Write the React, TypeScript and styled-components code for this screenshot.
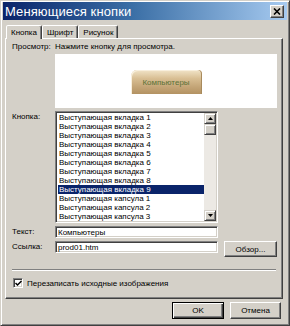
import React from "react";
import styled, { createGlobalStyle } from "styled-components";

const Global = createGlobalStyle`
  html, body { margin: 0; padding: 0; background: #d4d0c8; overflow: hidden; }
  * { box-sizing: border-box; }
`;

const FONT = `"Liberation Sans", Arial, sans-serif`;

const Window = styled.div`
  width: 290px;
  height: 326px;
  background: #d4d0c8;
  border: 1px solid;
  border-color: #d4d0c8 #404040 #404040 #d4d0c8;
  box-shadow: inset 1px 1px 0 #ffffff, inset -1px -1px 0 #808080;
  padding: 1px 2px;
  display: flex;
  flex-direction: column;
  font-family: ${FONT};
  font-size: 8px;
  color: #000;
`;

const TitleBar = styled.div`
  height: 18px;
  display: flex;
  align-items: center;
  justify-content: space-between;
  padding: 0 3px 0 2px;
  background: linear-gradient(90deg, #0a246a 0%, #3a6ea5 45%, #a6caf0 100%);
`;

const Title = styled.span`
  color: #fff;
  font-size: 13px;
  letter-spacing: 0.1px;
`;

const CloseButton = styled.div`
  width: 14px;
  height: 13px;
  background: #d4d0c8;
  border: 1px solid;
  border-color: #fff #404040 #404040 #fff;
  box-shadow: inset -1px -1px 0 #808080;
  display: flex;
  align-items: center;
  justify-content: center;
`;

const Body = styled.div`
  flex: 1;
  display: flex;
  flex-direction: column;
  padding: 4px 4px 0 2px;
`;

const TabStrip = styled.div`
  display: flex;
  height: 14px;
  align-items: flex-end;
  padding-left: 1px;
`;

const Tab = styled.div<{ $active?: boolean }>`
  height: ${(p) => (p.$active ? 14 : 13)}px;
  padding: 0 4px;
  display: flex;
  align-items: center;
  border: 1px solid;
  border-bottom: none;
  border-color: #fff #404040 transparent #fff;
  box-shadow: inset -1px 0 0 #808080;
  border-radius: 2px 2px 0 0;
  background: #d4d0c8;
  position: relative;
  z-index: ${(p) => (p.$active ? 2 : 1)};
  margin-bottom: ${(p) => (p.$active ? -1 : 0)}px;
`;

const Panel = styled.div`
  height: 261px;
  border: 1px solid;
  border-color: #fff #404040 #404040 #fff;
  box-shadow: inset -1px -1px 0 #808080;
  padding: 3px 6px 0 6px;
  display: flex;
  flex-direction: column;
`;

const Row = styled.div<{ $mt?: number }>`
  display: grid;
  grid-template-columns: 43px 1fr;
  margin-top: ${(p) => p.$mt ?? 0}px;
  align-items: start;
`;

const Label = styled.div<{ $mt?: number }>`
  line-height: 10px;
  height: 10px;
  white-space: nowrap;
  margin-top: ${(p) => p.$mt ?? 0}px;
`;

const Hint = styled.div`
  line-height: 10px;
  white-space: nowrap;
  margin-bottom: 2px;
`;

const Preview = styled.div`
  width: 222px;
  height: 54px;
  background: #fff;
  display: flex;
  align-items: center;
  justify-content: center;
  padding-top: 2px;
`;

const SampleButton = styled.div`
  width: 71px;
  height: 24px;
  border-radius: 6px 4px 0 0;
  background: linear-gradient(180deg, #f1e4c8 0%, #d9bf94 35%, #c4a577 70%, #b39262 100%);
  box-shadow: inset -1px 0 0 #a88a5c, inset 1px 1px 0 #f8efdc;
  color: #5c7238;
  display: flex;
  align-items: center;
  justify-content: center;
  font-size: 8px;
`;

const Sunken = styled.div<{ $w: number; $h: number }>`
  width: ${(p) => p.$w}px;
  height: ${(p) => p.$h}px;
  background: #fff;
  border: 1px solid;
  border-color: #808080 #fff #fff #808080;
  box-shadow: inset 1px 1px 0 #404040, inset -1px -1px 0 #d4d0c8;
`;

const ListBox = styled(Sunken)`
  display: flex;
  padding: 1px;
`;

const Items = styled.div`
  flex: 1;
  display: flex;
  flex-direction: column;
  overflow: hidden;
  padding-left: 1px;
`;

const Item = styled.div<{ $selected?: boolean }>`
  height: 9px;
  line-height: 9px;
  flex-shrink: 0;
  padding-left: 1px;
  white-space: nowrap;
  background: ${(p) => (p.$selected ? "#0a246a" : "transparent")};
  color: ${(p) => (p.$selected ? "#fff" : "#000")};
`;

const ScrollBar = styled.div`
  width: 12px;
  display: flex;
  flex-direction: column;
  background-color: #ece9e4;
`;

const ScrollBtn = styled.div<{ $h?: number }>`
  height: ${(p) => p.$h ?? 11}px;
  background: #d4d0c8;
  border: 1px solid;
  border-color: #d4d0c8 #404040 #404040 #d4d0c8;
  box-shadow: inset 1px 1px 0 #fff, inset -1px -1px 0 #808080;
  display: flex;
  align-items: center;
  justify-content: center;
`;

const Track = styled.div`
  flex: 1;
`;

const Input = styled(Sunken)`
  display: flex;
  align-items: center;
  padding-left: 2px;
  line-height: 9px;
  white-space: nowrap;
`;

const LinkLine = styled.div`
  display: flex;
  align-items: flex-start;
  gap: 6px;
`;

const Button = styled.div<{ $w: number; $h?: number; $default?: boolean }>`
  width: ${(p) => p.$w}px;
  height: ${(p) => p.$h ?? 17}px;
  background: #d4d0c8;
  border: 1px solid;
  border-color: ${(p) => (p.$default ? "#000" : "#fff #404040 #404040 #fff")};
  box-shadow: ${(p) =>
    p.$default
      ? "inset 1px 1px 0 #fff, inset -1px -1px 0 #404040, inset -2px -2px 0 #808080"
      : "inset -1px -1px 0 #808080"};
  display: flex;
  align-items: center;
  justify-content: center;
  white-space: nowrap;
`;

const Separator = styled.div`
  margin-top: 12px;
  height: 2px;
  border-top: 1px solid #808080;
  border-bottom: 1px solid #fff;
`;

const CheckRow = styled.label`
  display: flex;
  align-items: center;
  gap: 4px;
  margin-top: 7px;
  padding-left: 1px;
  white-space: nowrap;
`;

const CheckBox = styled.div`
  width: 10px;
  height: 10px;
  background: #fff;
  border: 1px solid;
  border-color: #808080 #fff #fff #808080;
  box-shadow: inset 1px 1px 0 #404040, inset -1px -1px 0 #d4d0c8;
  display: flex;
  align-items: center;
  justify-content: center;
`;

const Footer = styled.div`
  display: flex;
  justify-content: flex-end;
  gap: 6px;
  padding-top: 3px;
  padding-right: 2px;
`;

const Arrow = ({ up }: { up?: boolean }) => (
  <svg width="5" height="3" viewBox="0 0 5 3">
    <path d={up ? "M0 3 L2.5 0 L5 3 Z" : "M0 0 L2.5 3 L5 0 Z"} fill="#000" />
  </svg>
);

const items = [
  "Выступающая вкладка 1",
  "Выступающая вкладка 2",
  "Выступающая вкладка 3",
  "Выступающая вкладка 4",
  "Выступающая вкладка 5",
  "Выступающая вкладка 6",
  "Выступающая вкладка 7",
  "Выступающая вкладка 8",
  "Выступающая вкладка 9",
  "Выступающая капсула 1",
  "Выступающая капсула 2",
  "Выступающая капсула 3",
];

export default function App() {
  return (
    <>
      <Global />
      <Window>
        <TitleBar>
          <Title>Меняющиеся кнопки</Title>
          <CloseButton>
            <svg width="8" height="7" viewBox="0 0 8 7">
              <path d="M1 0.5 L7 6.5 M7 0.5 L1 6.5" stroke="#000" strokeWidth="1.6" />
            </svg>
          </CloseButton>
        </TitleBar>
        <Body>
          <TabStrip>
            <Tab $active>Кнопка</Tab>
            <Tab>Шрифт</Tab>
            <Tab>Рисунок</Tab>
          </TabStrip>
          <Panel>
            <Row>
              <Label>Просмотр:</Label>
              <div>
                <Hint>Нажмите кнопку для просмотра.</Hint>
                <Preview>
                  <SampleButton>Компьютеры</SampleButton>
                </Preview>
              </div>
            </Row>
            <Row $mt={3}>
              <Label $mt={1}>Кнопка:</Label>
              <ListBox $w={163} $h={112}>
                <Items>
                  {items.map((t, i) => (
                    <Item key={t} $selected={i === 8}>
                      {t}
                    </Item>
                  ))}
                </Items>
                <ScrollBar>
                  <ScrollBtn $h={11}>
                    <Arrow up />
                  </ScrollBtn>
                  <ScrollBtn $h={11} />
                  <Track />
                  <ScrollBtn $h={11}>
                    <Arrow />
                  </ScrollBtn>
                </ScrollBar>
              </ListBox>
            </Row>
            <Row $mt={3}>
              <Label $mt={1}>Текст:</Label>
              <Input $w={163} $h={12}>Компьютеры</Input>
            </Row>
            <Row $mt={3}>
              <Label $mt={1}>Ссылка:</Label>
              <LinkLine>
                <Input $w={163} $h={12}>prod01.htm</Input>
                <Button $w={53} $h={16}>Обзор...</Button>
              </LinkLine>
            </Row>
            <Separator />
            <CheckRow>
              <CheckBox>
                <svg width="7" height="7" viewBox="0 0 7 7">
                  <path d="M0.5 3 L2.5 5 L6.5 1" stroke="#000" strokeWidth="1.5" fill="none" />
                </svg>
              </CheckBox>
              Перезаписать исходные изображения
            </CheckRow>
          </Panel>
          <Footer>
            <Button $w={52} $default>OK</Button>
            <Button $w={51}>Отмена</Button>
          </Footer>
        </Body>
      </Window>
    </>
  );
}
